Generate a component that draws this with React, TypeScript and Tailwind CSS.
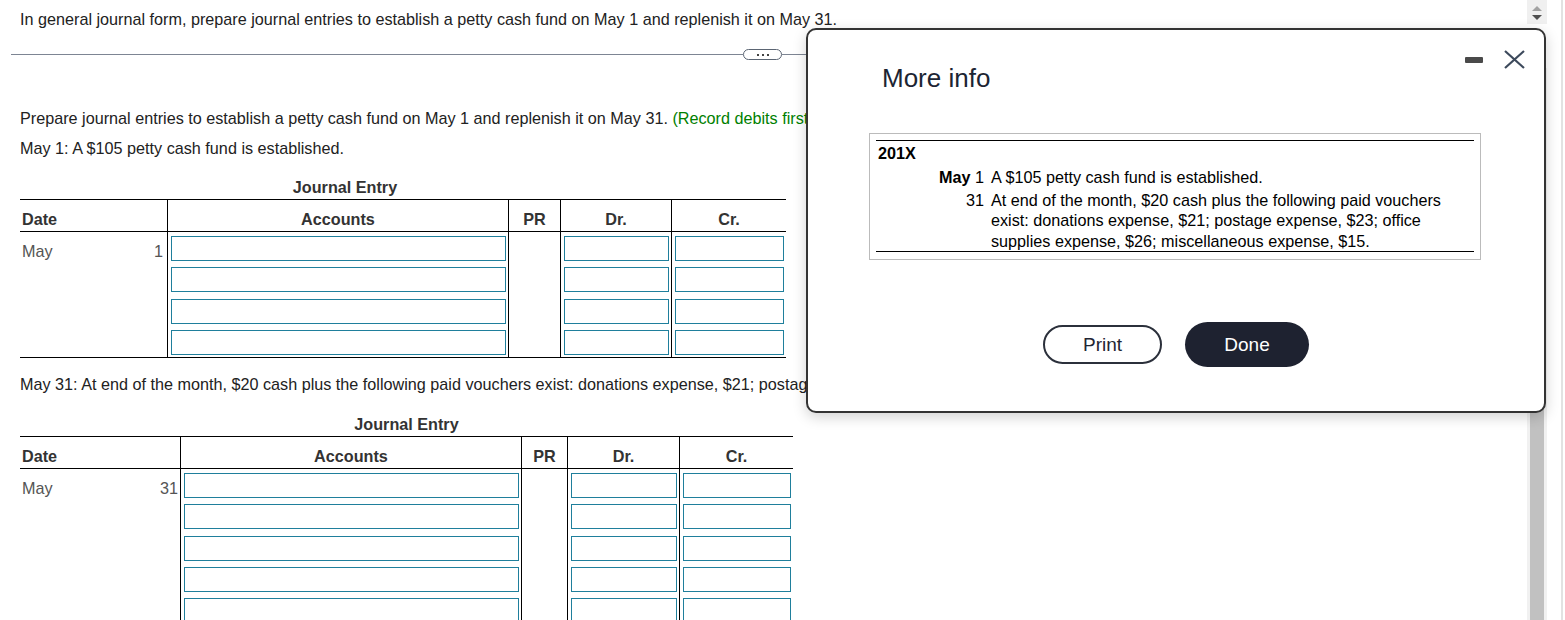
const inputCls = "block w-full h-[25px] border border-[#1f7f9c] bg-white";

function JournalTable({
  day,
  rows,
  cols,
  width,
  dayPad,
}: {
  day: string;
  rows: number;
  cols: string;
  width: string;
  dayPad: string;
}) {
  return (
    <div className={`${width} border-t border-b border-black`}>
      <div className={`grid ${cols} h-[32px] border-b border-black text-[#333] font-bold`}>
        <div className="pl-[2px] pt-[10px] leading-[18px]">Date</div>
        <div className="border-l border-black text-center pt-[10px] leading-[18px]">Accounts</div>
        <div className="border-l border-black text-center pt-[10px] leading-[18px]">PR</div>
        <div className="border-l border-black text-center pt-[10px] leading-[18px]">Dr.</div>
        <div className="border-l border-black text-center pt-[10px] leading-[18px]">Cr.</div>
      </div>
      <div className={`grid ${cols}`}>
        <div className="flex justify-between text-[#555] pl-[2px] pt-[10px] leading-[18px]">
          <span>May</span>
          <span className={dayPad}>{day}</span>
        </div>
        <div className="border-l border-black pl-[3px] pr-[2px]">
          {Array.from({ length: rows }).map((_, i) => (
            <div key={i} className="h-[31.3px] pt-[4px]">
              <div className={inputCls} />
            </div>
          ))}
        </div>
        <div className="border-l border-black" />
        <div className="border-l border-black pl-[3px] pr-[2px]">
          {Array.from({ length: rows }).map((_, i) => (
            <div key={i} className="h-[31.3px] pt-[4px]">
              <div className={inputCls} />
            </div>
          ))}
        </div>
        <div className="border-l border-black pl-[3px] pr-[2px]">
          {Array.from({ length: rows }).map((_, i) => (
            <div key={i} className="h-[31.3px] pt-[4px]">
              <div className={inputCls} />
            </div>
          ))}
        </div>
      </div>
    </div>
  );
}

function Scrollbar() {
  return (
    <div className="w-[20px] h-full flex flex-col">
      <div className="h-[24px] bg-[#f0f0f0] flex flex-col items-center pt-[6px] gap-[4px]">
        <svg width="10" height="5" viewBox="0 0 10 5">
          <path d="M0 5 L5 0 L10 5 Z" fill="#a3a3a3" />
        </svg>
        <svg width="10" height="5" viewBox="0 0 10 5">
          <path d="M0 0 L10 0 L5 5 Z" fill="#505050" />
        </svg>
      </div>
      <div className="h-[44px]" />
      <div className="flex-1 bg-[#f1f1f1] px-[3px]">
        <div className="h-full w-full bg-[#c1c1c1]" />
      </div>
    </div>
  );
}

function MoreInfo() {
  return (
    <div className="absolute left-[806px] top-[28px] w-[740px] h-[385px] bg-white border-2 border-[#333] rounded-[10px] shadow-[0_4px_14px_rgba(0,0,0,0.18)]">
      <div className="flex items-start">
        <h2 className="ml-[74px] mt-[33px] text-[26px] leading-[30px] text-[#1c2533]">More info</h2>
        <div className="ml-auto mr-[19px] mt-[20px] flex items-center gap-[21px]">
          <div className="w-[18px] h-[6px] rounded-[1px] bg-[#4a4a4a]" />
          <svg width="21" height="19" viewBox="0 0 21 19">
            <path d="M1 1 L20 18 M20 1 L1 18" stroke="#3d4a5c" strokeWidth="2.2" />
          </svg>
        </div>
      </div>

      <div className="ml-[61px] mt-[40px] w-[612px] border border-[#bbb] px-[6px] pt-[6px] pb-[7px] text-black leading-[20.5px]">
        <div className="border-t border-b border-black pt-[2px]">
          <div className="pl-[2px] font-bold">201X</div>
          <div className="grid grid-cols-[108px_1fr] gap-x-[7px] pt-[3px]">
            <div className="text-right">
              <span className="font-bold">May</span> 1
            </div>
            <div>A $105 petty cash fund is established.</div>
          </div>
          <div className="grid grid-cols-[108px_1fr] gap-x-[7px] pt-[2.5px]">
            <div className="text-right">31</div>
            <div>
              At end of the month, $20 cash plus the following paid vouchers exist: donations expense,
              $21; postage expense, $23; office supplies expense, $26; miscellaneous expense, $15.
            </div>
          </div>
        </div>
      </div>

      <div className="mt-[62px] flex items-center justify-center gap-[23px]">
        <button className="w-[119px] h-[39px] rounded-full border-2 border-[#2b303b] text-[19px] leading-[22px] pt-[1px] text-[#1f2533]">
          Print
        </button>
        <button className="w-[124px] h-[45px] rounded-full bg-[#1e2230] text-[19px] leading-[22px] pt-[1px] text-white">
          Done
        </button>
      </div>
    </div>
  );
}

export default function App() {
  return (
    <div
      className="relative flex w-[1565px] h-[620px] overflow-hidden bg-white text-[16.2px] text-[#222]"
      style={{ fontFamily: '"Liberation Sans", Arial, sans-serif' }}
    >
      <div className="w-[1527px] h-full">
        <p className="pl-[20px] pt-[10px] leading-[18px] whitespace-nowrap">
          In general journal form, prepare journal entries to establish a petty cash fund on May 1 and
          replenish it on May 31.
        </p>

        <div className="mt-[21px] ml-[11px] flex items-center h-[11px]">
          <div className="w-[732px] h-px bg-[#7d8593]" />
          <div className="w-[39px] h-[11px] rounded-full border-[1.5px] border-[#5b6573] flex items-center justify-center gap-[3px]">
            <span className="w-[2px] h-[2px] bg-[#444]" />
            <span className="w-[2px] h-[2px] bg-[#444]" />
            <span className="w-[2px] h-[2px] bg-[#444]" />
          </div>
          <div className="flex-1 h-px bg-[#7d8593]" />
        </div>

        <p className="mt-[49px] pl-[20px] leading-[18px] whitespace-nowrap">
          Prepare journal entries to establish a petty cash fund on May 1 and replenish it on May 31.{" "}
          <span className="text-[#008000]">(Record debits first, then credits. Exclude explanations from journal entries.)</span>
        </p>
        <p className="mt-[12px] pl-[20px] leading-[18px]">May 1: A $105 petty cash fund is established.</p>

        <div className="mt-[21px] ml-[20px] w-[650px] text-center font-bold text-[#333] leading-[18px]">
          Journal Entry
        </div>
        <div className="mt-[3px] ml-[20px]">
          <JournalTable
            day="1"
            rows={4}
            width="w-[766px]"
            cols="grid-cols-[147px_341px_52px_111px_115px]"
            dayPad="pr-[4px]"
          />
        </div>

        <p className="mt-[17px] pl-[20px] leading-[18px] whitespace-nowrap">
          May 31: At end of the month, $20 cash plus the following paid vouchers exist: donations expense,
          $21; postage expense, $23; office supplies expense, $26; miscellaneous expense, $15.
        </p>

        <div className="mt-[22px] ml-[20px] w-[773px] text-center font-bold text-[#333] leading-[18px]">
          Journal Entry
        </div>
        <div className="mt-[3px] ml-[20px]">
          <JournalTable
            day="31"
            rows={5}
            width="w-[773px]"
            cols="grid-cols-[160px_341px_46px_112px_114px]"
            dayPad="pr-[2px]"
          />
        </div>
      </div>

      <Scrollbar />
      <div className="w-[14px]" />
      <div className="w-[2px] h-full bg-[#e2e2e2]" />

      <MoreInfo />
    </div>
  );
}
